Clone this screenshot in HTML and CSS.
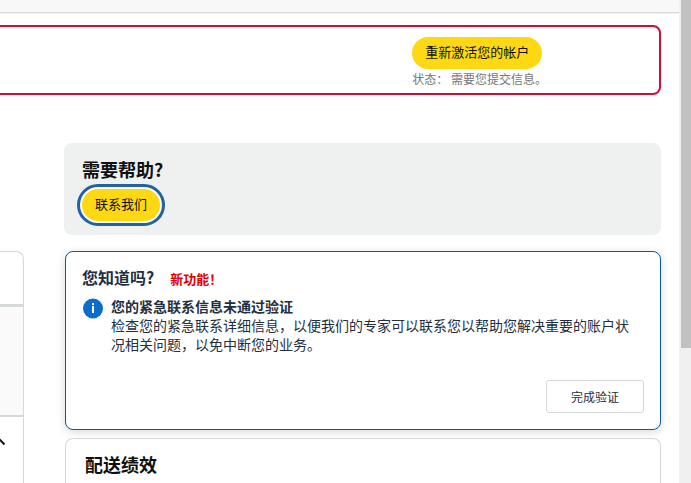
FILE: index.html
```html
<!DOCTYPE html>
<html lang="zh-CN">
<head>
<meta charset="utf-8">
<meta name="viewport" content="width=device-width, initial-scale=1">
<title>帐户状况</title>
<link rel="stylesheet" href="styles.css">
</head>
<body>
<div class="page">
  <header class="topbar"></header>
  <section class="alert">
    <div class="alert-action">
      <button class="pill" type="button">重新激活您的帐户</button>
      <p class="status">状态： 需要您提交信息。</p>
    </div>
  </section>
  <div class="columns">
    <aside class="panel">
      <div class="panel-head"></div>
      <div class="panel-body"></div>
      <div class="panel-foot">
        <svg class="chevron" width="16" height="10" viewBox="0 0 16 10" aria-hidden="true"><path d="M2 8.500 8 1.800 14.500 8.500" fill="none" stroke="#111" stroke-width="2"/></svg>
      </div>
    </aside>
    <main class="content">
      <section class="help">
        <h2 class="heading">需要帮助?</h2>
        <button class="pill pill-focus" type="button">联系我们</button>
      </section>
      <section class="card card-active">
        <div class="card-title">
          <h3 class="subheading">您知道吗?</h3>
          <span class="new">新功能！</span>
        </div>
        <div class="notice">
          <svg class="info" width="20" height="22" viewBox="0 0 20 22" aria-hidden="true"><circle cx="10" cy="11.500" r="10" fill="#0a6ccb"/><rect x="9" y="6" width="2" height="2" fill="#fff"/><rect x="9" y="9" width="2" height="7" fill="#fff"/></svg>
          <div>
            <h4 class="notice-title">您的紧急联系信息未通过验证</h4>
            <p class="notice-text">检查您的紧急联系详细信息，以便我们的专家可以联系您以帮助您解决重要的账户状况相关问题，以免中断您的业务。</p>
          </div>
        </div>
        <button class="verify" type="button">完成验证</button>
      </section>
      <section class="card card-metrics">
        <h2 class="heading">配送绩效</h2>
      </section>
    </main>
  </div>
</div>
<div class="scrollbar"><div class="thumb"></div></div>
</body>
</html>
```
FILE: styles.css
```css
* { box-sizing: border-box; }
body {
  margin: 0;
  height: 100vh;
  display: flex;
  overflow: hidden;
  background: #fff;
  color: #232f3e;
  font-family: "Noto Sans CJK SC", sans-serif;
}
h2, h3, h4, p { margin: 0; }
button { font-family: inherit; margin: 0; }
.page {
  flex: 1;
  min-width: 0;
  display: flex;
  flex-direction: column;
}
.topbar {
  flex: none;
  height: 13px;
  background: #f8f8f8;
  border-bottom: 1px solid #d9d9d9;
  box-shadow: 0 1px 1px #f0f0f0;
}
.alert {
  flex: none;
  display: flex;
  justify-content: flex-end;
  margin: 12px 18px 0 0;
  padding: 10px 112px 4px 0;
  border: 2px solid #c7103c;
  border-left: 0;
  border-radius: 0 8px 8px 0;
}
.pill {
  display: block;
  height: 32px;
  padding: 0 13px 2px;
  border: 0;
  border-radius: 16px;
  background: #ffd814;
  color: #0f1111;
  font-size: 13px;
  line-height: 30px;
}
.status {
  color: #767676;
  font-size: 12px;
  line-height: 20px;
}
.columns {
  flex: 1;
  min-height: 0;
  display: flex;
  gap: 40px;
  margin: 48px 18px 0 0;
}
.panel {
  flex: none;
  width: 24px;
  margin-top: 108px;
  display: flex;
  flex-direction: column;
  border: 1px solid #d5d9d9;
  border-width: 1px 1px 0 0;
  border-radius: 0 8px 0 0;
}
.panel-head { height: 52px; }
.panel-body {
  height: 113px;
  background: #fafafa;
  border-top: 3px solid #d5d9d9;
  border-bottom: 2px solid #d5d9d9;
}
.panel-foot {
  display: flex;
  justify-content: flex-end;
  padding: 19px 17px 0 0;
}
.chevron { flex: none; }
.content {
  flex: 1;
  min-width: 0;
  display: flex;
  flex-direction: column;
}
.help {
  flex: none;
  padding: 12px 18px 14px;
  background: #eff1f1;
  border-radius: 8px;
}
.heading {
  color: #0f1111;
  font-size: 18px;
  line-height: 28px;
}
.pill-focus {
  margin-top: 6px;
  outline: 3px solid #2162a1;
  outline-offset: 2px;
}
.help .pill { box-shadow: 0 0 0 2px #fff; }
.card {
  margin-left: 1px;
  border: 1px solid #d5d9d9;
  border-radius: 8px;
  background: #fff;
}
.card-active {
  flex: none;
  display: flex;
  flex-direction: column;
  margin-top: 16px;
  padding: 15px 16px 16px;
  border-color: #0a5a9c;
  box-shadow: 0 2px 8px rgba(15, 17, 17, 0.16);
}
.card-title {
  display: flex;
  align-items: baseline;
  gap: 16px;
}
.subheading {
  font-size: 16px;
  font-weight: 600;
  line-height: 20px;
}
.new {
  color: #e00000;
  font-size: 13px;
  font-weight: 700;
  line-height: 20px;
}
.notice {
  display: flex;
  gap: 8px;
  margin: 8px 0 26px;
  padding: 0 8px 0 1px;
}
.info { flex: none; }
.notice-title,
.notice-text {
  font-size: 14px;
  line-height: 19px;
}
.verify {
  align-self: flex-end;
  width: 98px;
  height: 33px;
  padding: 0;
  border: 1px solid #d5d9d9;
  border-radius: 3px;
  background: #fff;
  color: #232f3e;
  font-size: 12px;
}
.card-metrics {
  flex: 1;
  min-height: 0;
  margin-top: 8px;
  padding: 11px 19px 0;
  border-bottom: 0;
  border-radius: 8px 8px 0 0;
}
.scrollbar {
  flex: none;
  width: 12px;
  padding-left: 2px;
  background: #f0f0f0;
}
.thumb {
  height: 72%;
  background: #c1c1c1;
}
```
